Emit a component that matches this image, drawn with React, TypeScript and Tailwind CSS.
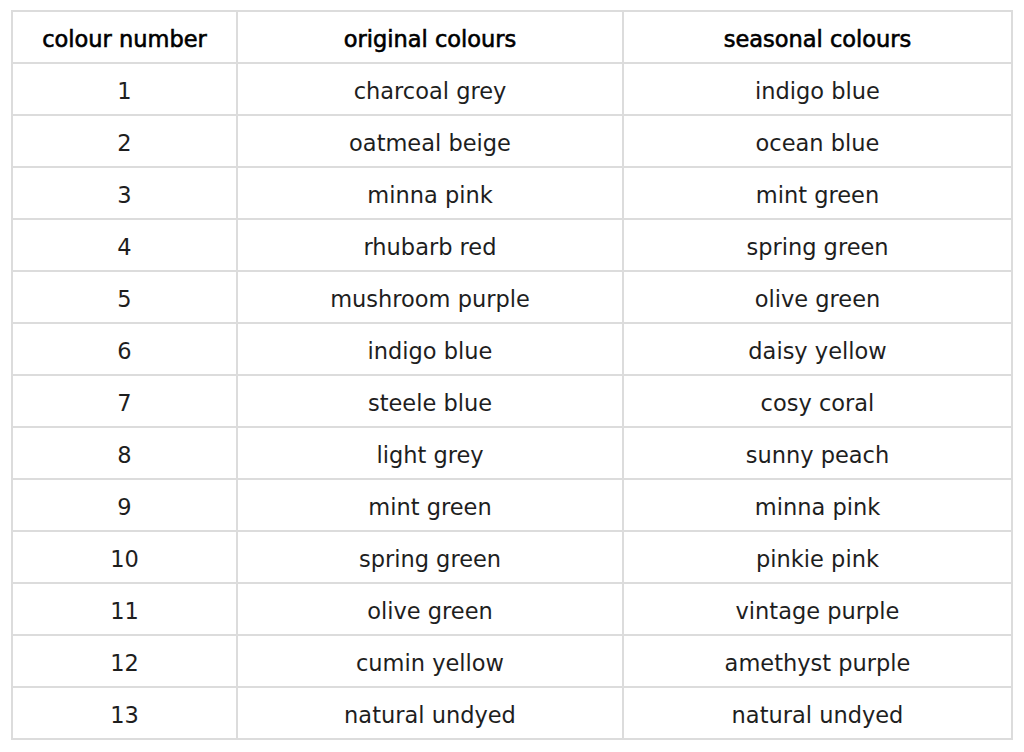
const rows: [string, string, string][] = [
  ["1", "charcoal grey", "indigo blue"],
  ["2", "oatmeal beige", "ocean blue"],
  ["3", "minna pink", "mint green"],
  ["4", "rhubarb red", "spring green"],
  ["5", "mushroom purple", "olive green"],
  ["6", "indigo blue", "daisy yellow"],
  ["7", "steele blue", "cosy coral"],
  ["8", "light grey", "sunny peach"],
  ["9", "mint green", "minna pink"],
  ["10", "spring green", "pinkie pink"],
  ["11", "olive green", "vintage purple"],
  ["12", "cumin yellow", "amethyst purple"],
  ["13", "natural undyed", "natural undyed"],
];

export default function App() {
  return (
    <div className="w-[1024px] h-[752px] bg-white pt-[10px] pl-[11px] [font-family:'DejaVu_Sans',sans-serif]">
      <div className="w-[1002px] border-l-2 border-t-2 border-[#dcdcdc] grid grid-cols-[225px_386px_389px]">
        {["colour number", "original colours", "seasonal colours"].map((h) => (
          <div
            key={h}
            className="h-[52px] border-r-2 border-b-2 border-[#dcdcdc] flex items-center justify-center text-[22.5px] text-black pt-[5px] [-webkit-text-stroke:0.6px_black]"
          >
            {h}
          </div>
        ))}
        {rows.map((r) =>
          r.map((c, i) => (
            <div
              key={r[0] + "-" + i}
              className="h-[52px] border-r-2 border-b-2 border-[#dcdcdc] flex items-center justify-center text-[22.5px] text-[#1e1e1e] pt-[5px]"
            >
              {c}
            </div>
          ))
        )}
      </div>
    </div>
  );
}
